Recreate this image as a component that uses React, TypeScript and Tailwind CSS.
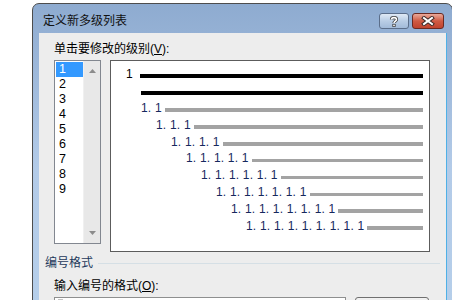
import React from "react";

const levels = [
  { pl: "pl-[30px]", t: "1. 1" },
  { pl: "pl-[45px]", t: "1. 1. 1" },
  { pl: "pl-[60px]", t: "1. 1. 1. 1" },
  { pl: "pl-[75px]", t: "1. 1. 1. 1. 1" },
  { pl: "pl-[90px]", t: "1. 1. 1. 1. 1. 1" },
  { pl: "pl-[105px]", t: "1. 1. 1. 1. 1. 1. 1" },
  { pl: "pl-[120px]", t: "1. 1. 1. 1. 1. 1. 1. 1" },
  { pl: "pl-[135px]", t: "1. 1. 1. 1. 1. 1. 1. 1. 1" },
];

export default function App() {
  return (
    <div className="w-[452px] h-[300px] bg-white overflow-hidden font-['Liberation_Sans','Noto_Sans_CJK_SC',sans-serif] text-[12px] text-black">
      <div className="ml-[32px] mt-[3px] w-[421px] h-[330px] rounded-t-[7px] border border-[#4d4d4d] bg-gradient-to-b from-[#8eabd0] via-[#b3cbe8] to-[#b6cfea] flex flex-col">
        {/* title bar */}
        <div className="h-[29px] flex items-start pl-[10px] pr-[8px]">
          <div className="mt-[8px] text-[12px] leading-[16px] text-[#111] font-['Noto_Sans_CJK_SC',sans-serif]">定义新多级列表</div>
          <div className="ml-auto mt-[9px] flex gap-[3px]">
            <div className="w-[30px] h-[16px] rounded-[3px] border border-[#5b6e8a] bg-gradient-to-b from-[#dfe9f5] via-[#b9cde5] to-[#a2bbd9] flex items-center justify-center">
              <svg width="10" height="11" viewBox="0 0 10 11">
                <path d="M2.5 3.5 C2.5 1 7.5 1 7.5 3.5 C7.5 5.2 5 5.3 5 7" fill="none" stroke="#3a3a3a" strokeWidth="3.2" />
                <path d="M2.5 3.5 C2.5 1 7.5 1 7.5 3.5 C7.5 5.2 5 5.3 5 7" fill="none" stroke="#fff" strokeWidth="1.6" />
                <rect x="3.4" y="7.9" width="3.2" height="3" fill="#3a3a3a" />
                <rect x="4.2" y="8.6" width="1.6" height="1.6" fill="#fff" />
              </svg>
            </div>
            <div className="w-[32px] h-[16px] rounded-[3px] border border-[#6b2a22] bg-gradient-to-b from-[#e9a99a] via-[#cf5a43] to-[#c0432e] flex items-center justify-center">
              <svg width="14" height="10" viewBox="0 0 14 10">
                <path d="M3 2 L11 8 M11 2 L3 8" stroke="#3b2a28" strokeWidth="4" strokeLinecap="square" />
                <path d="M3 2 L11 8 M11 2 L3 8" stroke="#fff" strokeWidth="2" strokeLinecap="square" />
              </svg>
            </div>
          </div>
        </div>
        {/* client */}
        <div className="ml-[6px] mr-[6px] flex-1 bg-[#ededed] shadow-[1px_0_0_#4fb0e6] flex flex-col">
          <div className="pt-[8px] pl-[15px] leading-[16px]">
            单击要修改的级别(<span className="underline">V</span>):
          </div>
          <div className="mt-[3px] pl-[15px] flex items-start">
            {/* listbox */}
            <div className="w-[47px] h-[184px] border border-[#828790] bg-white flex">
              <div className="flex-1 pl-[1px] pt-[1px] flex flex-col">
                {[1, 2, 3, 4, 5, 6, 7, 8, 9].map((n) => (
                  <div
                    key={n}
                    className={
                      n === 1
                        ? "h-[15px] leading-[15px] pl-[3px] bg-[#3399ff] text-white text-[12.5px]"
                        : "h-[15px] leading-[15px] pl-[3px] text-[12.5px]"
                    }
                  >
                    {n}
                  </div>
                ))}
              </div>
              <div className="w-[17px] bg-[#e8e8e8] border-l border-[#f0f0f0] flex flex-col items-center justify-between pt-[8px] pb-[8px]">
                <svg width="7" height="4" viewBox="0 0 7 4">
                  <path d="M0 4 L3.5 0 L7 4 Z" fill="#8c8c8c" />
                </svg>
                <svg width="7" height="4" viewBox="0 0 7 4">
                  <path d="M0 0 L3.5 4 L7 0 Z" fill="#8c8c8c" />
                </svg>
              </div>
            </div>
            {/* preview */}
            <div className="ml-[9px] w-[320px] h-[192px] border border-[#5c5c5c] bg-white pt-[5px] pr-[6px] flex flex-col tracking-[0.2px]">
              <div className="h-[16.9px] leading-[16.9px] pl-[15px] flex items-baseline">
                <span>1</span>
                <div className="ml-[7px] flex-1 h-[4px] bg-black" />
              </div>
              <div className="h-[16.9px] leading-[16.9px] pl-[30px] flex items-baseline">
                <span className="invisible w-0">1</span>
                <div className="flex-1 h-[4px] bg-black" />
              </div>
              {levels.map((l) => (
                <div key={l.t} className={`h-[16.9px] leading-[16.9px] flex items-baseline ${l.pl}`}>
                  <span className="text-[#16285e] whitespace-pre">{l.t}</span>
                  <div className="ml-[3px] flex-1 h-[3.7px] bg-[#a3a3a3]" />
                </div>
              ))}
            </div>
          </div>
          {/* group header */}
          <div className="mt-[3px] pl-[6px] pr-[6px] flex items-center h-[16px]">
            <span className="text-[#1e395b] leading-[16px]">编号格式</span>
            <div className="ml-[5px] flex-1 h-px bg-[#d5dfe5]" />
          </div>
          <div className="mt-[7px] pl-[15px] leading-[16px]">
            输入编号的格式(<span className="underline">O</span>):
          </div>
          <div className="mt-[3px] pl-[15px] flex items-start">
            <div className="w-[292px] h-[22px] border border-[#8e8f8f] bg-white pl-[3px] pt-[1px]">
              <div className="w-[5px] h-[10px] bg-[#c4c4c4]" />
            </div>
            <div className="ml-[9px] w-[74px] h-[22px] rounded-[3px] border border-[#707070] bg-gradient-to-b from-[#f2f2f2] to-[#dddddd]" />
          </div>
        </div>
      </div>
    </div>
  );
}
